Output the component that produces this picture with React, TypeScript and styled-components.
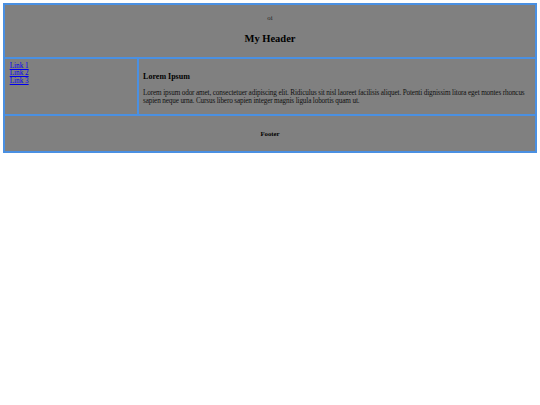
import React from 'react';
import styled, { createGlobalStyle } from 'styled-components';

const GlobalStyle = createGlobalStyle`
	body {
		margin: 3.2px;
		background: #ffffff;
		font-family: "Liberation Serif", "Times New Roman", serif;
		color: #000000;
	}
`;

const Layout = styled.div`
	display: grid;
	grid-template-columns: 1fr 3fr;
	grid-template-rows: 52px 55px 35px;
	gap: 2px;
	padding: 2px;
	background-color: #4a90e2;
`;

const Cell = styled.div`
	background-color: #808080;
`;

const Header = styled(Cell)`
	grid-column: 1 / span 2;
	display: flex;
	flex-direction: column;
	align-items: center;
	padding-top: 8.5px;
`;

const Small = styled.p`
	margin: 0;
	font-size: 6.8px;
	line-height: 8px;
	color: #222;
`;

const Title = styled.h1`
	margin: 11.5px 0 0;
	font-size: 10.5px;
	line-height: 12px;
	font-weight: bold;
`;

const Sidebar = styled(Cell)`
	padding: 4px 4.5px;
	display: flex;
	flex-direction: column;
	align-items: flex-start;
`;

const NavLink = styled.a`
	font-size: 7.2px;
	line-height: 7.2px;
	color: #0000ee;
	text-decoration: underline;
`;

const Main = styled(Cell)`
	padding: 12.5px 4px 0;
`;

const SectionTitle = styled.h3`
	margin: 0 0 8.5px;
	font-size: 8px;
	line-height: 9px;
	font-weight: bold;
`;

const Body = styled.p`
	margin: 0;
	font-size: 7.2px;
	letter-spacing: -0.14px;
	line-height: 8px;
	color: #111;
`;

const Footer = styled(Cell)`
	grid-column: 1 / span 2;
	display: flex;
	align-items: center;
	justify-content: center;
	font-size: 6.8px;
	font-weight: bold;
`;

const links = ['Link 1', 'Link 2', 'Link 3'];

export default function App() {
	return (
		<>
			<GlobalStyle />
			<Layout>
				<Header>
					<Small>oi</Small>
					<Title>My Header</Title>
				</Header>
				<Sidebar>
					{links.map(l => (
						<NavLink key={l} href="#">{l}</NavLink>
					))}
				</Sidebar>
				<Main>
					<SectionTitle>Lorem Ipsum</SectionTitle>
					<Body>
						Lorem ipsum odor amet, consectetuer adipiscing elit. Ridiculus sit nisl laoreet facilisis aliquet. Potenti dignissim litora eget montes rhoncus sapien neque urna. Cursus libero sapien integer magnis ligula lobortis quam ut.
					</Body>
				</Main>
				<Footer>Footer</Footer>
			</Layout>
		</>
	);
}
